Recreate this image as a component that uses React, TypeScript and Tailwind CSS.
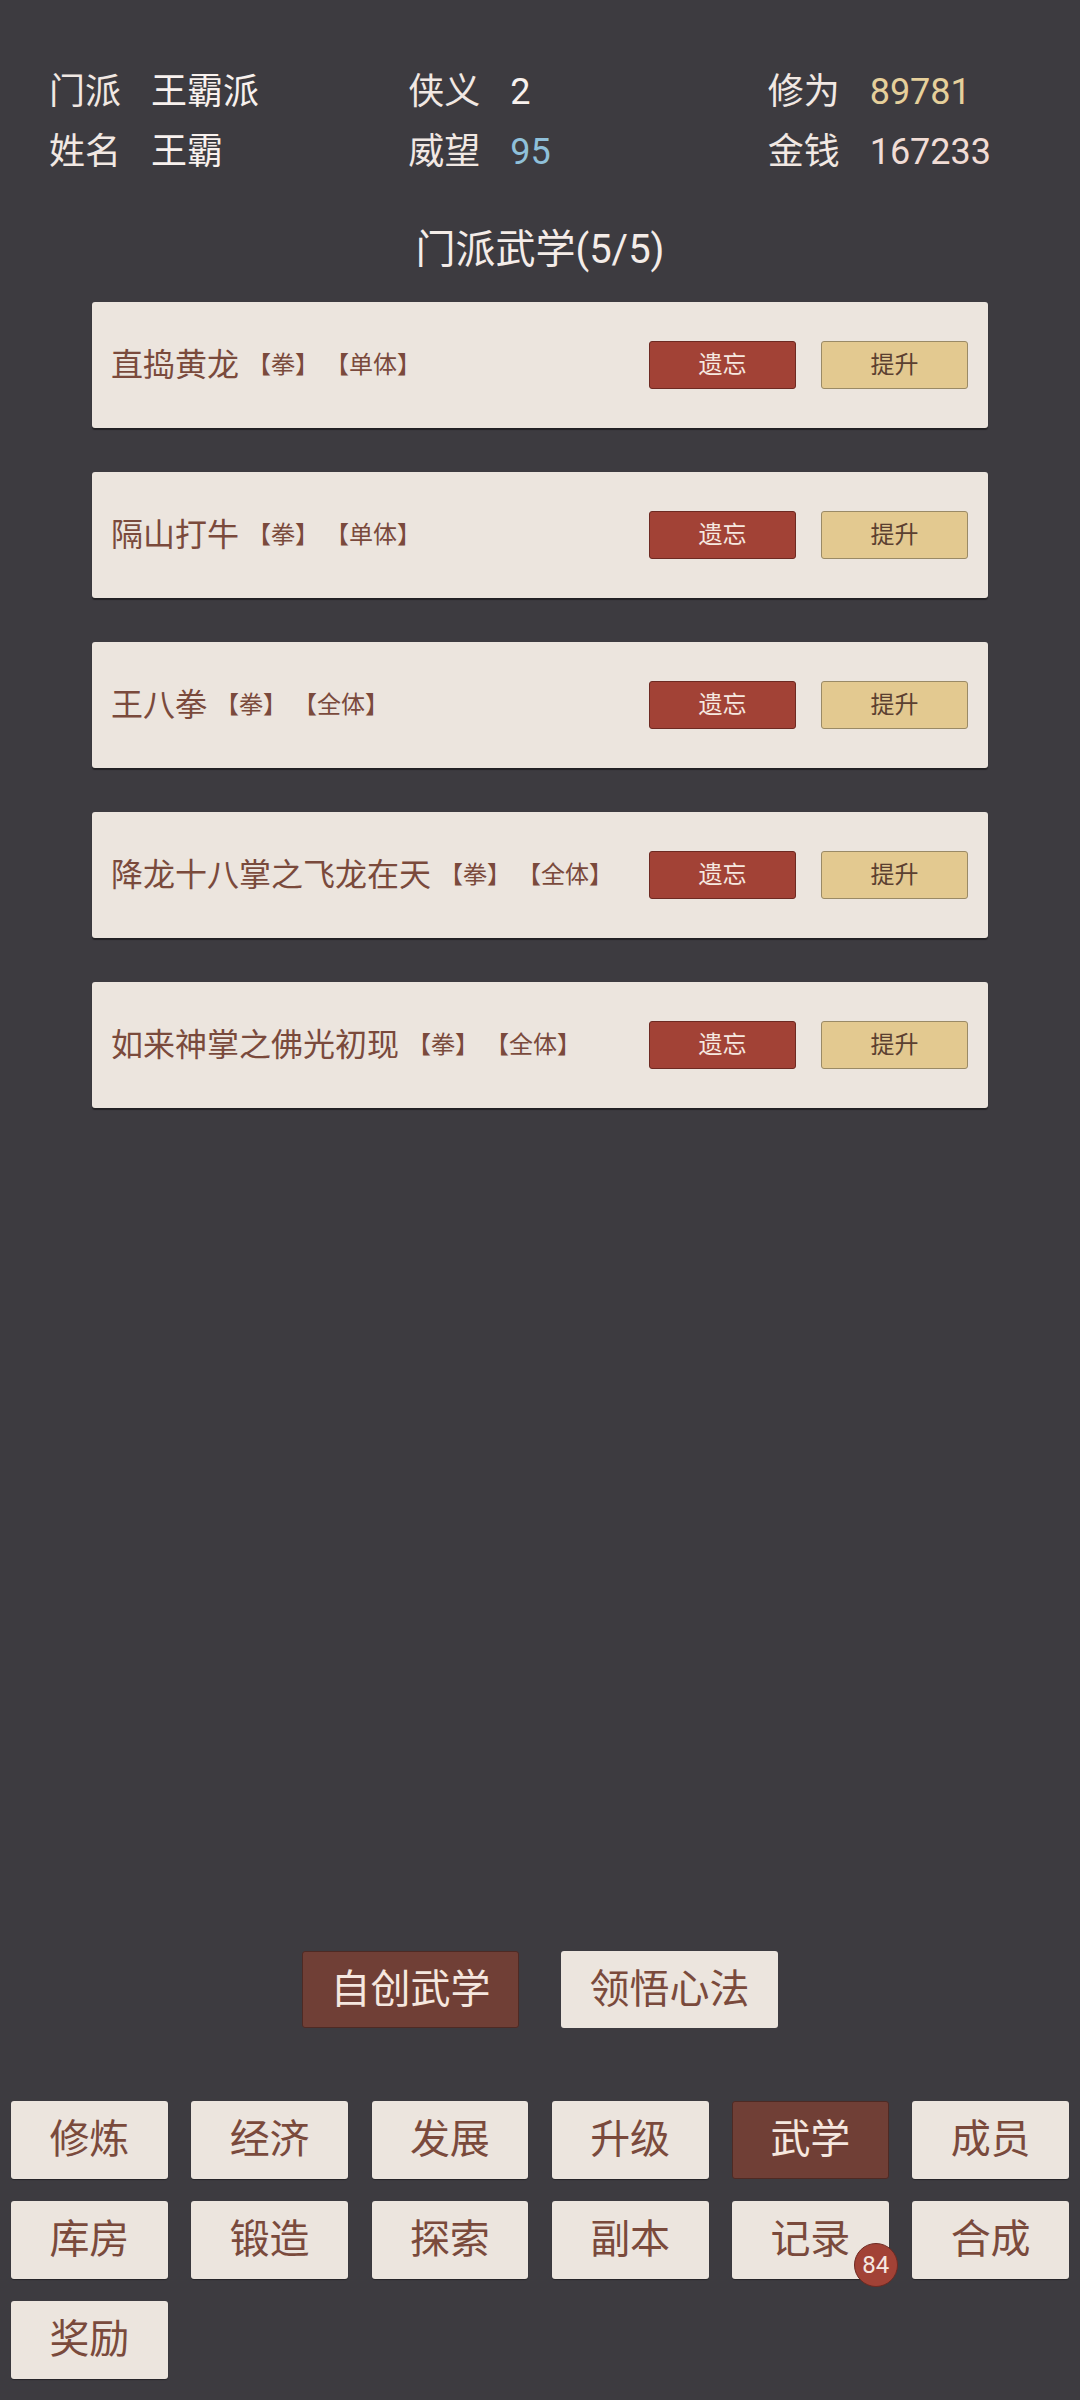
import React from "react";

const FONT = { fontFamily: 'Roboto, "Noto Sans CJK SC", "Noto Sans", sans-serif' };

const skills = [
  { name: "直捣黄龙", tags: ["【拳】", "【单体】"] },
  { name: "隔山打牛", tags: ["【拳】", "【单体】"] },
  { name: "王八拳", tags: ["【拳】", "【全体】"] },
  { name: "降龙十八掌之飞龙在天", tags: ["【拳】", "【全体】"] },
  { name: "如来神掌之佛光初现", tags: ["【拳】", "【全体】"] },
];

const nav = ["修炼", "经济", "发展", "升级", "武学", "成员", "库房", "锻造", "探索", "副本", "记录", "合成", "奖励"];

function Stat({ label, value, color }: { label: string; value: string; color: string }) {
  return (
    <div className="flex items-center pl-[49px] h-[60px] text-[36px] leading-[60px]">
      <span className="text-[#f1e8e3] w-[102px]">{label}</span>
      <span className={color}>{value}</span>
    </div>
  );
}

export default function App() {
  return (
    <div className="w-[1080px] h-[2400px] bg-[#3d3b40] flex flex-col" style={FONT}>
      <div className="grid grid-cols-3 w-[1078px] pt-[62px]">
        <Stat label="门派" value="王霸派" color="text-[#f8f1ee]" />
        <Stat label="侠义" value="2" color="text-[#f8f1ee]" />
        <Stat label="修为" value="89781" color="text-[#e6d09b]" />
        <Stat label="姓名" value="王霸" color="text-[#f8f1ee]" />
        <Stat label="威望" value="95" color="text-[#8fc0da]" />
        <Stat label="金钱" value="167233" color="text-[#f1dcd5]" />
      </div>
      <div className="mt-[38px] text-center text-[40px] leading-[60px] text-[#f4ece8]">门派武学(5/5)</div>
      <div className="mt-[22px] flex flex-col gap-[44px] items-center">
        {skills.map((s) => (
          <div
            key={s.name}
            className="w-[896px] h-[126px] bg-[#ece5de] rounded-[3px] shadow-[0_2px_1px_rgba(0,0,0,0.45)] flex items-center pl-[19px] pr-[20px]"
          >
            <div className="flex-1 flex items-center text-[#7a4a3c] whitespace-pre">
              <span className="text-[32px]">{s.name} </span>
              <span className="text-[24px]">{s.tags.join(" ")}</span>
            </div>
            <button className="w-[147px] h-[48px] rounded-[3px] bg-[#a24236] border border-[#6e2a22] text-[#f6e8e0] text-[24px] flex items-center justify-center">
              遗忘
            </button>
            <button className="ml-[25px] w-[147px] h-[48px] rounded-[3px] bg-[#e3c990] border border-[#9a8a66] text-[#5b4030] text-[24px] flex items-center justify-center">
              提升
            </button>
          </div>
        ))}
      </div>
      <div className="flex-1" />
      <div className="flex justify-center gap-[42px]">
        <button className="w-[217px] h-[77px] rounded-[3px] bg-[#703f36] border border-[#4e2a24] text-[#f5e7df] text-[40px] flex items-center justify-center">
          自创武学
        </button>
        <button className="w-[217px] h-[77px] rounded-[3px] bg-[#ece5de] text-[#7a4a3c] text-[40px] flex items-center justify-center">
          领悟心法
        </button>
      </div>
      <div className="mt-[73px] grid grid-cols-6 gap-x-[23.5px] gap-y-[22px] px-[11px] pb-[21px]">
        {nav.map((n) => {
          const active = n === "武学";
          return (
            <div key={n} className="relative">
              <button
                className={
                  active
                    ? "w-full h-[78px] rounded-[3px] bg-[#703f36] border border-[#4e2a24] text-[#f5e7df] text-[40px] flex items-center justify-center"
                    : "w-full h-[78px] rounded-[3px] bg-[#ece5de] shadow-[0_1px_1px_rgba(0,0,0,0.4)] text-[#7a4a3c] text-[40px] flex items-center justify-center"
                }
              >
                {n}
              </button>
              {n === "记录" && (
                <div className="absolute right-[-9px] bottom-[-8px] w-[44px] h-[44px] rounded-full bg-[#a24236] border border-[#6e2a22] text-[#f6e8e0] text-[24px] flex items-center justify-center">
                  84
                </div>
              )}
            </div>
          );
        })}
      </div>
    </div>
  );
}
